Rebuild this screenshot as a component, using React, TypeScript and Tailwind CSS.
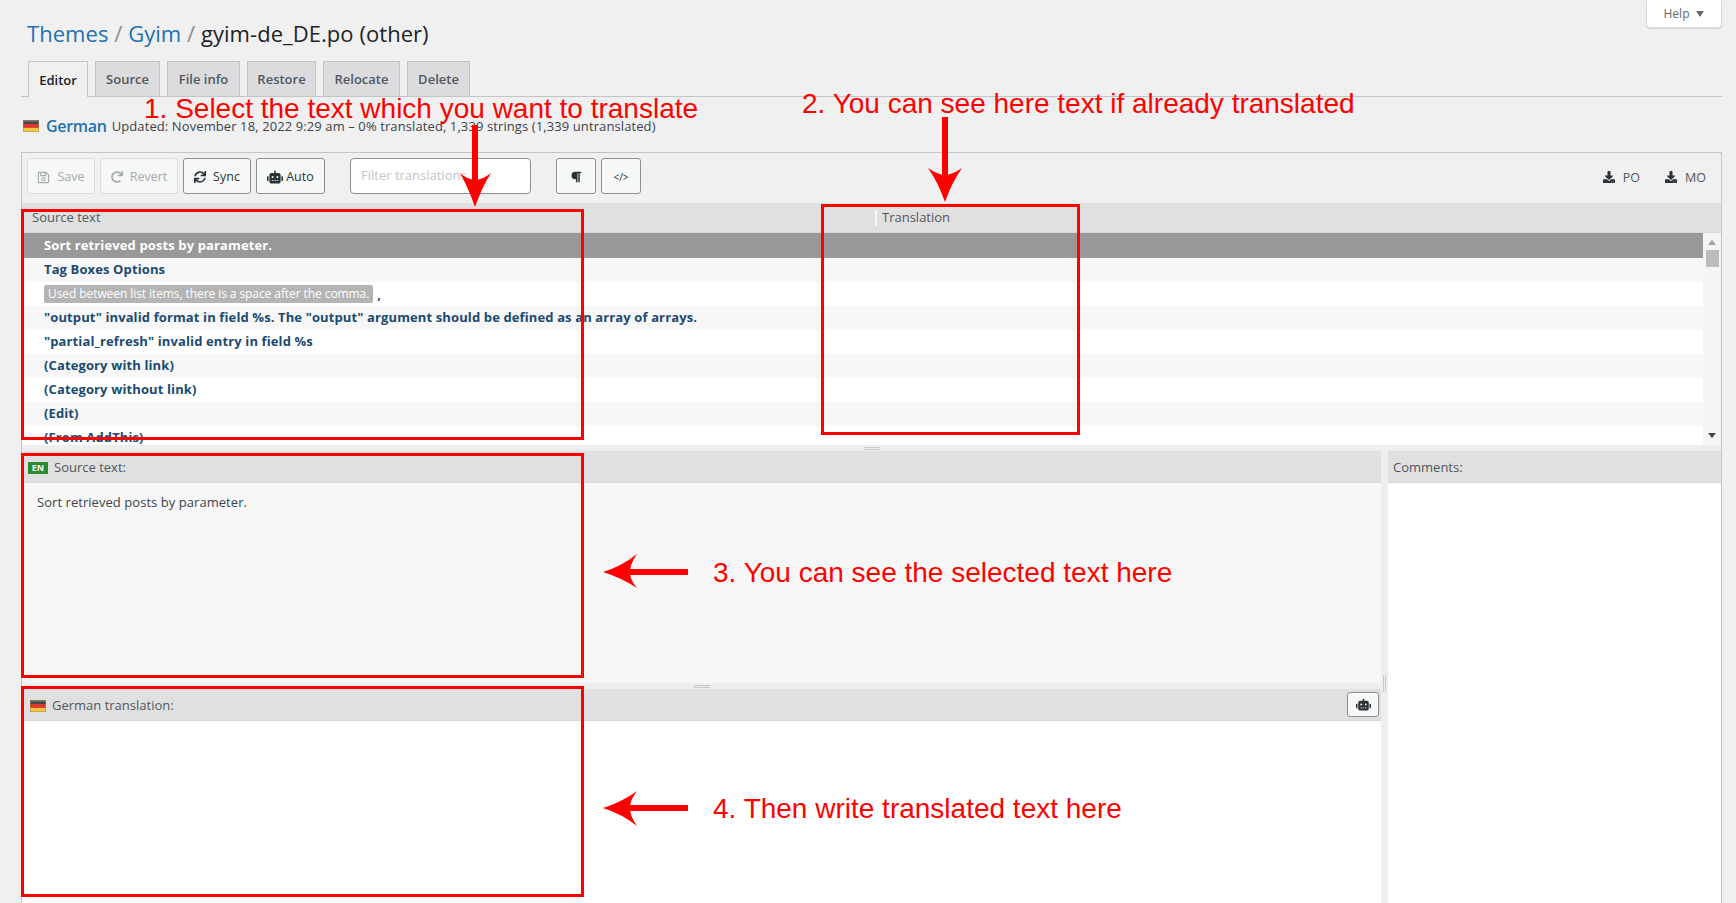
import type { FC, PropsWithChildren } from "react";
import {
  FaRegSave,
  FaRedo,
  FaSync,
  FaRobot,
  FaDownload,
  FaParagraph,
} from "react-icons/fa";

const rows = [
  { text: "Tag Boxes Options" },
  { text: "Used between list items, there is a space after the comma.", context: true },
  { text: '"output" invalid format in field %s. The "output" argument should be defined as an array of arrays.' },
  { text: '"partial_refresh" invalid entry in field %s' },
  { text: "(Category with link)" },
  { text: "(Category without link)" },
  { text: "(Edit)" },
  { text: "(From AddThis)" },
];

const tabs = [
  { label: "Source", w: "w-[65px]" },
  { label: "File info", w: "w-[73px]" },
  { label: "Restore", w: "w-[69px]" },
  { label: "Relocate", w: "w-[77px]" },
  { label: "Delete", w: "w-[63px]" },
];

const Flag: FC = () => (
  <svg width="16" height="12" viewBox="0 0 16 12" className="shrink-0">
    <rect width="16" height="12" fill="#a08a5a" />
    <rect x="0.5" y="0.5" width="15" height="3.6" fill="#454545" />
    <rect x="0.5" y="4.1" width="15" height="3.8" fill="#e2332c" />
    <rect x="0.5" y="7.9" width="15" height="3.6" fill="#f5c542" />
    <rect x="0.5" y="0.5" width="15" height="1.2" fill="#ffffff" opacity="0.25" />
  </svg>
);

const ToolButton: FC<PropsWithChildren<{ disabled?: boolean; className: string }>> = ({
  children,
  disabled,
  className,
}) => (
  <button
    type="button"
    className={`flex h-[36px] shrink-0 items-center justify-center gap-[7px] rounded-[3px] border bg-[#f6f7f7] pt-[2px] text-[12.5px] ${
      disabled ? "border-[#dcdcde] text-[#a7aaad]" : "border-[#8c8f94] text-[#2c3338]"
    } ${className}`}
  >
    {children}
  </button>
);

const PaneHeader: FC<PropsWithChildren<{ className?: string }>> = ({ children, className }) => (
  <div
    className={`flex shrink-0 items-center border-b border-[#d8d8d8] bg-[#e0e0e0] text-[13px] text-[#50575e] ${className ?? ""}`}
  >
    {children}
  </div>
);

const Annotation: FC<PropsWithChildren<{ className: string }>> = ({ children, className }) => (
  <div
    className={`absolute whitespace-nowrap font-['Liberation_Sans',Arial,sans-serif] text-[28px] leading-[32px] text-[#ff0000] ${className}`}
  >
    {children}
  </div>
);

const Arrows: FC = () => (
  <svg width="1736" height="903" viewBox="0 0 1736 903" className="pointer-events-none absolute left-0 top-0">
    <g fill="#ff0000">
      <rect x="472" y="125" width="6" height="60" />
      <path d="M475 207 Q482 187 491 173 Q482 180 475 180 Q468 180 460 173 Q468 187 475 207Z" />
      <rect x="942" y="117" width="6" height="60" />
      <path d="M945 202 Q952 182 962 168 Q952 175 945 175 Q938 175 928 168 Q938 182 945 202Z" />
      <rect x="625" y="569" width="63" height="6" />
      <path d="M603 572 Q622 566 637 554 Q630 564 630 572 Q630 580 637 588 Q622 578 603 572Z" />
      <rect x="625" y="805" width="63" height="6" />
      <path d="M603 808 Q622 802 637 791 Q630 800 630 808 Q630 816 637 826 Q622 814 603 808Z" />
    </g>
  </svg>
);

export default function App() {
  return (
    <div className="relative h-[903px] w-full overflow-hidden bg-[#f0f0f1] pl-[21px] pr-[14px] font-['Open_Sans',sans-serif] text-[#3c434a]">
      <div className="flex h-[61px] items-start justify-between">
        <h1 className="ml-[6px] mt-[17px] text-[22px] font-normal leading-[32px] tracking-[0.05px] text-[#1d2327]">
          <span className="text-[#2271b1]">Themes</span>
          <span className="text-[#8c8f94]"> / </span>
          <span className="text-[#2271b1]">Gyim</span>
          <span className="text-[#8c8f94]"> / </span>
          gyim-de_DE.po (other)
        </h1>
        <button
          type="button"
          className="flex h-[28px] w-[76px] items-center justify-center gap-[7px] rounded-b-[4px] border border-t-0 border-[#dcdcde] bg-white text-[12px] text-[#646970] shadow-[0_1px_1px_rgba(0,0,0,0.12)]"
        >
          Help
          <svg width="8" height="6" viewBox="0 0 8 6">
            <path d="M0 0h8L4 6z" fill="#646970" />
          </svg>
        </button>
      </div>

      <div className="flex h-[36px] gap-[7px] border-b border-[#c3c4c7] pl-[7px]">
        <div className="z-10 flex h-[36px] w-[60px] items-center justify-center border border-b-0 border-[#c3c4c7] bg-[#f0f0f1] pt-[2px] text-[13px] font-semibold text-[#1d2327]">
          Editor
        </div>
        {tabs.map((tab) => (
          <div
            key={tab.label}
            className={`flex h-[35px] items-center justify-center border border-b-0 border-[#c3c4c7] bg-[#dcdcde] pt-[2px] text-[13px] font-semibold text-[#50575e] ${tab.w}`}
          >
            {tab.label}
          </div>
        ))}
      </div>

      <div className="flex h-[55px] items-start pl-[2px] pt-[20px]">
        <div className="mt-[3px]">
          <Flag />
        </div>
        <span className="ml-[7px] text-[16px] font-semibold leading-[18px] tracking-[-0.3px] text-[#2271b1]">German</span>
        <span className="ml-[5px] text-[13px] leading-[18px] tracking-[0.1px] text-[#3c434a]">
          Updated: November 18, 2022 9:29 am – 0% translated, 1,339 strings (1,339 untranslated)
        </span>
      </div>

      <div className="flex h-[751px] flex-col border-x border-t border-[#c3c4c7]">
        <div className="flex h-[50px] shrink-0 items-start justify-between pl-[5px] pr-[15px] pt-[5px]">
          <div className="flex items-center">
            <ToolButton disabled className="w-[68px]">
              <FaRegSave size={13} /> Save
            </ToolButton>
            <ToolButton disabled className="ml-[5px] w-[78px]">
              <FaRedo size={12} /> Revert
            </ToolButton>
            <ToolButton className="ml-[5px] w-[68px]">
              <FaSync size={12} /> Sync
            </ToolButton>
            <ToolButton className="ml-[5px] w-[69px] !gap-[3px]">
              <FaRobot size={16} /> Auto
            </ToolButton>
            <div className="ml-[25px] flex h-[36px] w-[181px] items-center rounded-[4px] border border-[#8c8f94] bg-white pl-[10px] text-[13px] text-[#c3c4c7]">
              Filter translations…
            </div>
            <ToolButton className="ml-[25px] w-[40px]">
              <FaParagraph size={12} />
            </ToolButton>
            <ToolButton className="ml-[5px] w-[40px]">
              <span className="text-[10px]">&lt;/&gt;</span>
            </ToolButton>
          </div>
          <div className="flex items-center pt-[11px] text-[12.5px] text-[#50575e]">
            <FaDownload size={12} className="-mt-[3px] text-[#2c3338]" />
            <span className="ml-[8px]">PO</span>
            <FaDownload size={12} className="-mt-[3px] ml-[25px] text-[#2c3338]" />
            <span className="ml-[8px]">MO</span>
          </div>
        </div>

        <PaneHeader className="h-[30px] pt-[1px]">
          <span className="w-[853px] pl-[10px]">Source text</span>
          <span className="h-[16px] w-[2px] bg-[#f6f7f7]" />
          <span className="pl-[5px]">Translation</span>
        </PaneHeader>

        <div className="flex h-[212px] shrink-0 overflow-hidden bg-white">
          <div className="min-w-0 flex-1 text-[13px] leading-[22px]">
            <div className="h-[25px] bg-[#999999] pl-[22px] font-bold leading-[24px] tracking-[0.12px] text-white">
              Sort retrieved posts by parameter.
            </div>
            {rows.map((row, i) => (
              <div
                key={row.text}
                className={`h-[24px] whitespace-nowrap pl-[22px] font-bold tracking-[0.12px] text-[#1b4a72] ${
                  i % 2 === 0 ? "bg-[#f7f7f7]" : "bg-white"
                }`}
              >
                {row.context ? (
                  <span className="flex items-center pt-[3px] leading-[18px]">
                    <span className="flex h-[18px] items-center rounded-[2px] bg-[#b4b4b4] px-[4px] text-[12px] font-normal tracking-[-0.08px] text-white">
                      {row.text}
                    </span>
                    <span className="ml-[4px]">,</span>
                  </span>
                ) : (
                  row.text
                )}
              </div>
            ))}
          </div>
          <div className="flex w-[18px] shrink-0 flex-col items-center bg-[#f5f5f5]">
            <svg width="8" height="5" viewBox="0 0 8 5" className="mt-[7px]">
              <path d="M0 5h8L4 0z" fill="#a0a0a0" />
            </svg>
            <div className="mt-[5px] h-[17px] w-[13px] bg-[#bcbcbc]" />
            <svg width="8" height="5" viewBox="0 0 8 5" className="mt-[166px]">
              <path d="M0 0h8L4 5z" fill="#3c434a" />
            </svg>
          </div>
        </div>

        <div className="flex h-[6px] shrink-0 flex-col items-center justify-center gap-[1px] bg-[#eeeeee]">
          <span className="h-px w-[16px] bg-[#c8c8c8]" />
          <span className="h-px w-[16px] bg-[#c8c8c8]" />
        </div>

        <div className="flex min-h-0 flex-1">
          <div className="flex min-w-0 flex-1 flex-col">
            <PaneHeader className="h-[32px] pl-[6px] pt-[3px]">
              <span className="flex h-[12px] w-[20px] items-center justify-center bg-[#2a8a2e] text-[9px] font-bold text-white">
                EN
              </span>
              <span className="ml-[6px]">Source text:</span>
            </PaneHeader>
            <div className="h-[200px] shrink-0 bg-[#f7f7f7] pl-[15px] pt-[10px] text-[13px] leading-[18px] tracking-[0.05px]">
              Sort retrieved posts by parameter.
            </div>
            <div className="flex h-[6px] shrink-0 flex-col items-center justify-center gap-[1px] bg-[#eeeeee]">
              <span className="h-px w-[16px] bg-[#c8c8c8]" />
              <span className="h-px w-[16px] bg-[#c8c8c8]" />
            </div>
            <PaneHeader className="h-[32px] justify-between pl-[8px] pr-[2px]">
              <span className="flex items-center gap-[6px] pt-[3px]">
                <Flag />
                German translation:
              </span>
              <button
                type="button"
                className="flex h-[25px] w-[32px] items-center justify-center rounded-[3px] border border-[#8c8f94] bg-[#f6f7f7] text-[#2c3338]"
              >
                <FaRobot size={15} />
              </button>
            </PaneHeader>
            <div className="flex-1 bg-white" />
          </div>
          <div className="flex w-[7px] shrink-0 justify-center gap-[1px] bg-[#eeeeee] pt-[224px]">
            <span className="h-[17px] w-px bg-[#c8c8c8]" />
            <span className="h-[17px] w-px bg-[#c8c8c8]" />
          </div>
          <div className="flex w-[333px] shrink-0 flex-col">
            <PaneHeader className="h-[32px] pl-[5px] pt-[3px]">Comments:</PaneHeader>
            <div className="flex-1 bg-white" />
          </div>
        </div>
      </div>

      <div className="absolute left-[21px] top-[209px] h-[231px] w-[563px] border-[3px] border-[#ff0000]" />
      <div className="absolute left-[821px] top-[204px] h-[231px] w-[259px] border-[3px] border-[#ff0000]" />
      <div className="absolute left-[21px] top-[453px] h-[225px] w-[563px] border-[3px] border-[#ff0000]" />
      <div className="absolute left-[21px] top-[686px] h-[211px] w-[563px] border-[3px] border-[#ff0000]" />

      <Annotation className="left-[144px] top-[93px]">1. Select the text which you want to translate</Annotation>
      <Annotation className="left-[802px] top-[88px]">2. You can see here text if already translated</Annotation>
      <Annotation className="left-[713px] top-[557px]">3. You can see the selected text here</Annotation>
      <Annotation className="left-[713px] top-[793px]">4. Then write translated text here</Annotation>

      <Arrows />
    </div>
  );
}
